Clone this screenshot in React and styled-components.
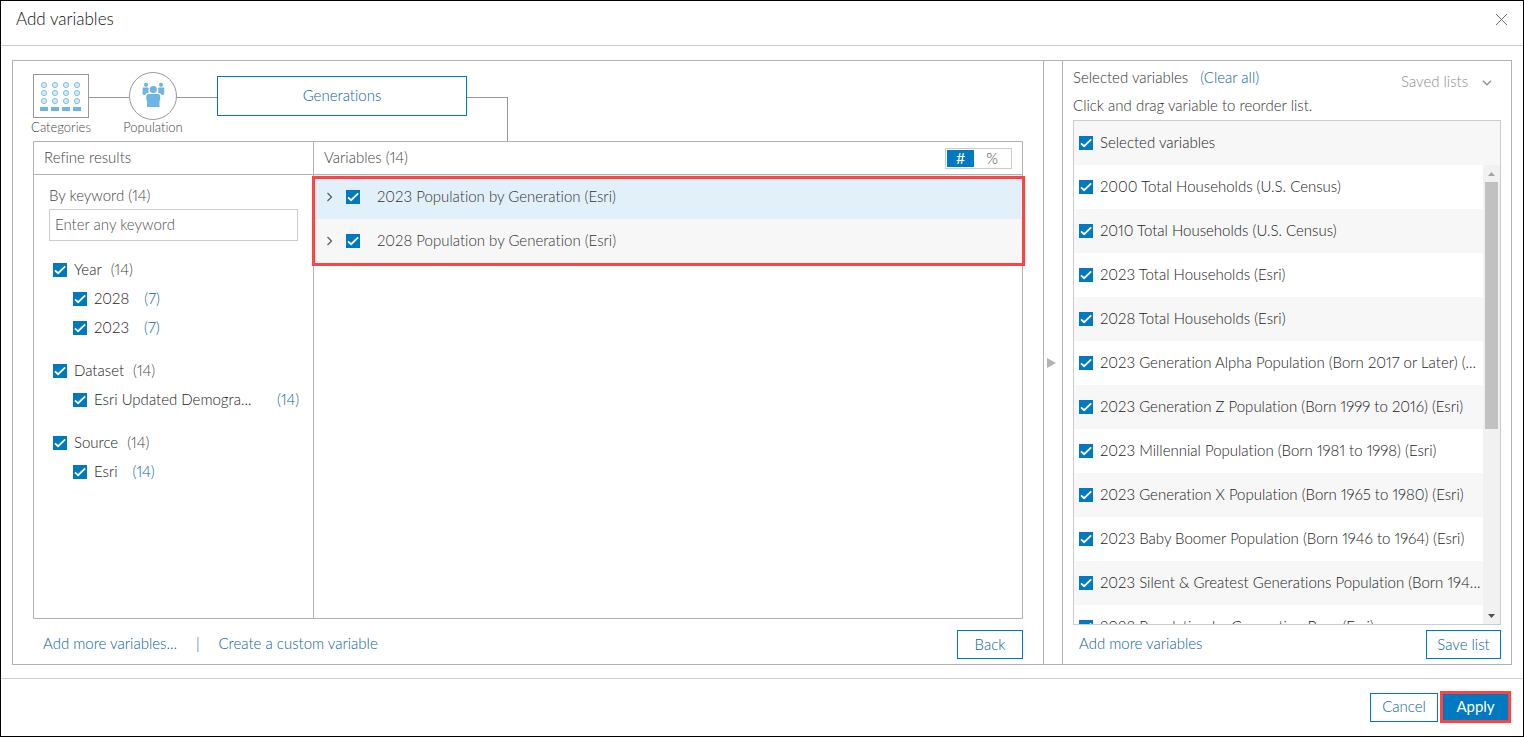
import React, { useState } from "react";
import styled, { createGlobalStyle, css } from "styled-components";

const blue = "#0079c1";
const linkBlue = "#0a64a2";
const line = "#b3b3b3";
const alertRed = "#ff4242";

const GlobalStyle = createGlobalStyle`
  *, *::before, *::after { box-sizing: border-box; }
  body {
    margin: 0;
    background: #fff;
    color: #333;
    font-family: Lato, "Open Sans", sans-serif;
    font-size: 15px;
    font-weight: 300;
    line-height: 20px;
    font-variant-ligatures: none;
    font-variant-numeric: proportional-nums;
  }
  button, input, select { font: inherit; color: inherit; }
`;

const Dialog = styled.main`
  display: flex;
  flex-direction: column;
  height: 100vh;
  min-height: 560px;
  border: 1px solid #000;
`;

const DialogHeader = styled.header`
  display: flex;
  justify-content: space-between;
  align-items: flex-start;
  height: 45px;
  padding: 8px 15px 0 15px;
  border-bottom: 1px solid #ccc;
`;

const Title = styled.h1`
  margin: 0;
  font-size: 17px;
  line-height: 20px;
  font-weight: 300;
  color: #111;
`;

const CloseButton = styled.button`
  display: flex;
  padding: 4px 0 0;
  border: 0;
  background: none;
  color: #6e6e6e;
  cursor: pointer;
`;

const Panel = styled.div`
  display: flex;
  flex: 1;
  min-height: 0;
  margin: 14px 11px 13px;
  border: 1px solid ${line};
`;

const Browser = styled.section`
  display: flex;
  flex-direction: column;
  flex: 1;
  min-width: 0;
  padding: 0 20px;
`;

const Steps = styled.nav`
  display: flex;
  align-items: flex-start;
  height: 80px;
  padding-top: 11px;
`;

const Step = styled.a`
  display: flex;
  flex-direction: column;
  align-items: center;
  width: ${(p) => p.$width}px;
  font-size: 13px;
  line-height: 14px;
  color: #444;
  text-decoration: none;
  white-space: nowrap;
`;

const StepIcon = styled.span`
  display: flex;
  align-items: center;
  height: 48px;
`;

const Connector = styled.span`
  width: 40px;
  height: 1px;
  margin-top: 25px;
  background: #999;
`;

const Elbow = styled.span`
  width: 41px;
  height: 44px;
  margin-top: 25px;
  border: solid #999;
  border-width: 1px 1px 0 0;
`;

const CurrentStep = styled.button`
  width: 250px;
  height: 40px;
  margin-top: 4px;
  padding: 0 0 2px;
  border: 1px solid ${blue};
  background: #fff;
  color: ${linkBlue};
`;

const Results = styled.div`
  display: flex;
  flex: 1;
  min-height: 0;
  border: 1px solid ${line};
`;

const Refine = styled.aside`
  flex: 0 0 280px;
  min-width: 0;
  border-right: 1px solid ${line};
`;

const Variables = styled.div`
  flex: 1;
  min-width: 0;
`;

const ColumnHeader = styled.div`
  display: flex;
  align-items: center;
  justify-content: space-between;
  height: 33px;
  padding: 0 10px;
  border-bottom: 1px solid ${line};
  color: #444;
`;

const ColumnTitle = styled.h2`
  margin: 0;
  padding-bottom: 2px;
  font-size: 15px;
  font-weight: 300;
`;

const Segments = styled.div`
  display: flex;
  width: 67px;
  height: 21px;
  padding: 1px;
  border: 1px solid #ccc;
`;

const Segment = styled.button`
  width: ${(p) => (p.$active ? 27 : 36)}px;
  padding: 0;
  border: 0;
  line-height: 16px;
  font-weight: ${(p) => (p.$active ? 400 : 300)};
  background: ${(p) => (p.$active ? blue : "#fff")};
  color: ${(p) => (p.$active ? "#fff" : "#444")};
`;

const RefineBody = styled.div`
  padding: 10px 15px;
`;

const KeywordLabel = styled.label`
  display: block;
  color: #444;
`;

const KeywordInput = styled.input`
  display: block;
  width: 100%;
  height: 32px;
  margin: 4px 0 15px;
  padding: 0 5px 2px;
  border: 1px solid #ccc;
  border-radius: 0;
  outline: none;
  &::placeholder { color: #505050; opacity: 1; }
`;

const FacetGroup = styled.div`
  margin-bottom: 15px;
`;

const FacetRow = styled.div`
  display: flex;
  align-items: center;
  height: ${(p) => (p.$child ? 29 : 28)}px;
  padding-left: ${(p) => (p.$child ? 24 : 4)}px;
  white-space: nowrap;
  color: #222;
`;

const FacetCount = styled.span`
  margin-left: ${(p) => (p.$child ? 15 : 9)}px;
  padding-bottom: 2px;
  color: ${(p) => (p.$child ? linkBlue : "#444")};
`;

const CheckLabel = styled.label`
  display: flex;
  flex: none;
  align-items: center;
  gap: ${(p) => p.$gap || 7}px;
  max-width: 100%;
`;

const CheckText = styled.span`
  overflow: hidden;
  width: ${(p) => (p.$width ? p.$width + "px" : "auto")};
  padding-bottom: 2px;
  text-overflow: ellipsis;
  white-space: nowrap;
`;

const CheckBox = styled.span`
  display: grid;
  flex: none;
  width: 14px;
  height: 14px;
  > * { grid-area: 1 / 1; }
  input {
    appearance: none;
    width: 14px;
    height: 14px;
    margin: 0;
    border: 1px solid ${blue};
    background: #fff;
  }
  input:checked { background: ${blue}; }
  svg { pointer-events: none; }
`;

const VariableList = styled.ul`
  position: relative;
  margin: 0;
  padding: 0;
  list-style: none;
  &::after {
    content: "";
    position: absolute;
    inset: 1px -3px -3px -2px;
    border: 3px solid ${alertRed};
    pointer-events: none;
  }
`;

const VariableRow = styled.li`
  display: flex;
  align-items: center;
  gap: 13px;
  height: 44px;
  padding-left: 12px;
  background: ${(p) => (p.$active ? "#e2f0fa" : "#f7f7f7")};
`;

const ExpandButton = styled.button`
  display: flex;
  padding: 0;
  border: 0;
  background: none;
  color: #595959;
`;

const ActionRow = styled.div`
  display: flex;
  flex: none;
  align-items: flex-end;
  justify-content: space-between;
  height: ${(p) => p.$height}px;
  padding: 0 0 5px ${(p) => p.$indent}px;
`;

const Links = styled.div`
  display: flex;
  gap: 19px;
  margin-bottom: 6px;
  color: ${linkBlue};
`;

const Link = styled.a`
  color: ${linkBlue};
  text-decoration: none;
`;

const Button = styled.button`
  width: ${(p) => p.$width}px;
  height: 29px;
  padding: 0 0 2px;
  border: 1px solid ${blue};
  background: #fff;
  color: ${linkBlue};
  white-space: nowrap;
  ${(p) =>
    p.$primary &&
    css`
      height: 32px;
      border: 3px solid ${alertRed};
      background: ${blue};
      color: #fff;
      font-weight: 400;
    `}
`;

const CollapseBar = styled.button`
  display: flex;
  align-items: center;
  width: 20px;
  padding: 0 3px;
  border: solid ${line};
  border-width: 0 1px;
  background: #fff;
`;

const Selection = styled.section`
  display: flex;
  flex-direction: column;
  flex: 0 0 448px;
  min-width: 0;
  padding: 0 10px;
`;

const SelectionHead = styled.div`
  display: flex;
  justify-content: space-between;
  height: 59px;
  padding-top: 6px;
`;

const SelectionText = styled.div`
  display: flex;
  flex-direction: column;
  gap: 8px;
`;

const SelectionTitle = styled.div`
  display: flex;
  gap: 12px;
`;

const SavedLists = styled.div`
  position: relative;
  width: 100px;
  height: 24px;
  margin-top: 2px;
  svg {
    position: absolute;
    top: 11px;
    right: 9px;
    pointer-events: none;
  }
`;

const SavedSelect = styled.select`
  appearance: none;
  width: 100%;
  height: 24px;
  padding: 0;
  border: 0;
  background: none;
  color: #8c8c8c;
`;

const SelectedBox = styled.div`
  display: flex;
  flex-direction: column;
  flex: 1;
  min-height: 0;
  border: 1px solid #ccc;
`;

const SelectedRow = styled.div`
  display: flex;
  flex: none;
  align-items: center;
  height: 44px;
  padding: 0 2px 0 5px;
  color: #222;
  background: ${(p) => (p.$shade ? "#f7f7f7" : "#fff")};
`;

const ScrollArea = styled.div`
  display: flex;
  flex: 1;
  min-height: 0;
`;

const ScrollList = styled.div`
  flex: 1;
  min-width: 0;
  overflow-y: auto;
  scrollbar-width: none;
`;

const ScrollBar = styled.div`
  display: flex;
  flex-direction: column;
  align-items: center;
  width: 17px;
  background: #f1f1f1;
`;

const ScrollArrow = styled.span`
  display: flex;
  align-items: center;
  justify-content: center;
  height: 17px;
`;

const ScrollTrack = styled.div`
  flex: 1;
  width: 13px;
`;

const ScrollThumb = styled.div`
  height: 58%;
  background: #c1c1c1;
`;

const DialogFooter = styled.footer`
  display: flex;
  align-items: center;
  justify-content: flex-end;
  gap: 2px;
  height: 58px;
  padding: 0 12px 1px 0;
  border-top: 1px solid #ccc;
`;

function Check({ label, gap, width }) {
  return (
    <CheckLabel $gap={gap}>
      <CheckBox>
        <input type="checkbox" defaultChecked />
        <svg width="14" height="14" viewBox="0 0 14 14" fill="none" stroke="#fff" strokeWidth="1.8">
          <path d="M2 7.3 5.1 10.2 12.2 3.4" />
        </svg>
      </CheckBox>
      <CheckText $width={width}>{label}</CheckText>
    </CheckLabel>
  );
}

function CategoriesIcon() {
  return (
    <svg width="56" height="44" viewBox="0 0 56 44">
      <rect x=".5" y=".5" width="55" height="43" fill="#fff" stroke="#999" />
      {[11, 22, 33, 44].map((x) => (
        <g key={x}>
          {[11, 19, 27].map((y) => (
            <circle key={y} cx={x} cy={y} r="2.6" fill="#d2e9f9" stroke="#85c1ea" />
          ))}
          <rect x={x - 4} y="33" width="8" height="4" fill="#6db5e5" />
        </g>
      ))}
    </svg>
  );
}

function PopulationIcon() {
  return (
    <svg width="48" height="48" viewBox="0 0 48 48" fill="#6db5e5">
      <circle cx="24" cy="24" r="23.5" fill="#fff" stroke="#999" />
      <circle cx="17" cy="12.800" r="2.1" />
      <circle cx="32" cy="12.800" r="2.1" />
      <path d="M14.200 15.500h4.800l.8.8a5 5 0 0 0 0 4.200l-3 1.200-.6 1.300h-1.700l-.9-1.500v-5.200z" />
      <path d="M34.600 15.500h-4.800l-.8.8a5 5 0 0 1 0 4.200l3 1.200.6 1.300h1.700l.9-1.500v-5.200z" />
      <circle cx="24.300" cy="17.500" r="3.600" />
      <path d="M18.800 22h11l1.400 1.600V28l-.7.8V35H18v-6.200l-.7-.8v-4.400z" />
    </svg>
  );
}

const facets = [
  { name: "Year", count: 14, items: [["2028", 7], ["2023", 7]] },
  { name: "Dataset", count: 14, items: [["Esri Updated Demogra...", 14, 168]] },
  { name: "Source", count: 14, items: [["Esri", 14]] },
];

const variables = ["2023 Population by Generation (Esri)", "2028 Population by Generation (Esri)"];

const selected = [
  "2000 Total Households (U.S. Census)",
  "2010 Total Households (U.S. Census)",
  "2023 Total Households (Esri)",
  "2028 Total Households (Esri)",
  "2023 Generation Alpha Population (Born 2017 or Later) (...",
  "2023 Generation Z Population (Born 1999 to 2016) (Esri)",
  "2023 Millennial Population (Born 1981 to 1998) (Esri)",
  "2023 Generation X Population (Born 1965 to 1980) (Esri)",
  "2023 Baby Boomer Population (Born 1946 to 1964) (Esri)",
  "2023 Silent & Greatest Generations Population (Born 194...",
  "2023 Population by Generation Base (Esri)",
];

export default function App() {
  const [unit, setUnit] = useState("#");
  return (
    <Dialog>
      <GlobalStyle />
      <DialogHeader>
        <Title>Add variables</Title>
        <CloseButton aria-label="Close">
          <svg width="13" height="13" viewBox="0 0 13 13" fill="none" stroke="currentColor">
            <path d="M1 1 12 12M12 1 1 12" />
          </svg>
        </CloseButton>
      </DialogHeader>

      <Panel>
        <Browser>
          <Steps>
            <Step href="#categories" $width={56}>
              <StepIcon><CategoriesIcon /></StepIcon>
              Categories
            </Step>
            <Connector />
            <Step href="#population" $width={48}>
              <StepIcon><PopulationIcon /></StepIcon>
              Population
            </Step>
            <Connector />
            <CurrentStep>Generations</CurrentStep>
            <Elbow />
          </Steps>

          <Results>
            <Refine>
              <ColumnHeader><ColumnTitle>Refine results</ColumnTitle></ColumnHeader>
              <RefineBody>
                <KeywordLabel htmlFor="keyword">By keyword (14)</KeywordLabel>
                <KeywordInput id="keyword" type="text" placeholder="Enter any keyword" />
                {facets.map((facet) => (
                  <FacetGroup key={facet.name}>
                    <FacetRow>
                      <Check label={facet.name} />
                      <FacetCount>({facet.count})</FacetCount>
                    </FacetRow>
                    {facet.items.map(([name, count, width]) => (
                      <FacetRow key={name} $child>
                        <Check label={name} width={width} />
                        <FacetCount $child>({count})</FacetCount>
                      </FacetRow>
                    ))}
                  </FacetGroup>
                ))}
              </RefineBody>
            </Refine>

            <Variables>
              <ColumnHeader>
                <ColumnTitle>Variables (14)</ColumnTitle>
                <Segments>
                  {["#", "%"].map((u) => (
                    <Segment key={u} $active={u === unit} onClick={() => setUnit(u)}>{u}</Segment>
                  ))}
                </Segments>
              </ColumnHeader>
              <VariableList>
                {variables.map((name, i) => (
                  <VariableRow key={name} $active={i === 0}>
                    <ExpandButton aria-label="Expand">
                      <svg width="7" height="10" viewBox="0 0 7 10" fill="none" stroke="currentColor" strokeWidth="1.2">
                        <path d="M1.500 1 5.500 5 1.500 9" />
                      </svg>
                    </ExpandButton>
                    <Check label={name} gap={17} />
                  </VariableRow>
                ))}
              </VariableList>
            </Variables>
          </Results>

          <ActionRow $indent={10} $height={45}>
            <Links>
              <Link href="#more">Add more variables...</Link>
              <span>|</span>
              <Link href="#custom">Create a custom variable</Link>
            </Links>
            <Button $width={66}>Back</Button>
          </ActionRow>
        </Browser>

        <CollapseBar aria-label="Collapse selected variables">
          <svg width="9" height="10" viewBox="0 0 9 10" fill="#b3b3b3">
            <path d="M0 0 9 5 0 10z" />
          </svg>
        </CollapseBar>

        <Selection>
          <SelectionHead>
            <SelectionText>
              <SelectionTitle>
                <span>Selected variables</span>
                <Link href="#clear">(Clear all)</Link>
              </SelectionTitle>
              <span>Click and drag variable to reorder list.</span>
            </SelectionText>
            <SavedLists>
              <SavedSelect aria-label="Saved lists">
                <option>Saved lists</option>
              </SavedSelect>
              <svg width="10" height="6" viewBox="0 0 10 6" fill="none" stroke="#8c8c8c" strokeWidth="1.300">
                <path d="M1 .8 5 4.800 9 .8" />
              </svg>
            </SavedLists>
          </SelectionHead>
          <SelectedBox>
            <SelectedRow $shade><Check label="Selected variables" /></SelectedRow>
            <ScrollArea>
              <ScrollList>
                {selected.map((name, i) => (
                  <SelectedRow key={name} $shade={i % 2 === 1}><Check label={name} /></SelectedRow>
                ))}
              </ScrollList>
              <ScrollBar>
                <ScrollArrow>
                  <svg width="7" height="4" viewBox="0 0 7 4" fill="#a3a3a3"><path d="M0 4 3.500 0 7 4z" /></svg>
                </ScrollArrow>
                <ScrollTrack><ScrollThumb /></ScrollTrack>
                <ScrollArrow>
                  <svg width="7" height="4" viewBox="0 0 7 4" fill="#505050"><path d="M0 0 3.500 4 7 0z" /></svg>
                </ScrollArrow>
              </ScrollBar>
            </ScrollArea>
          </SelectedBox>
          <ActionRow $indent={6} $height={39}>
            <Links><Link href="#more-selected">Add more variables</Link></Links>
            <Button $width={75}>Save list</Button>
          </ActionRow>
        </Selection>
      </Panel>

      <DialogFooter>
        <Button $width={68}>Cancel</Button>
        <Button $width={71} $primary>Apply</Button>
      </DialogFooter>
    </Dialog>
  );
}
